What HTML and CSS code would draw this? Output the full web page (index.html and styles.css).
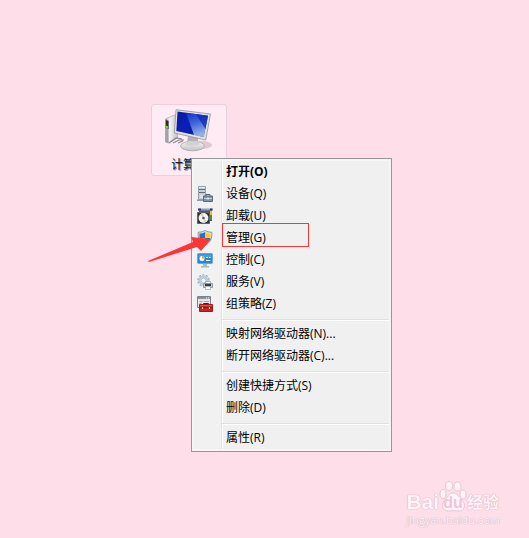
FILE: index.html
```html
<!DOCTYPE html>
<html lang="zh-CN">
<head>
  <meta charset="UTF-8">
  <meta name="viewport" content="width=device-width, initial-scale=1">
  <title>计算机</title>
  <link rel="stylesheet" href="styles.css">
</head>
<body>

  <main class="desktop">

    <div class="shortcut">
      <svg class="shortcut-icon" width="50" height="48" viewBox="0 0 50 48">
        <defs>
          <linearGradient id="screen" x1="0" y1="0" x2="1" y2="0.6">
            <stop offset="0" stop-color="#0a1a94"/>
            <stop offset="0.4" stop-color="#0a1fb8"/>
            <stop offset="1" stop-color="#0a1c9c"/>
          </linearGradient>
          <linearGradient id="shine" x1="0" y1="0" x2="0.3" y2="1">
            <stop offset="0" stop-color="#1238c8"/>
            <stop offset="0.5" stop-color="#4d7eea"/>
            <stop offset="1" stop-color="#c6dffc"/>
          </linearGradient>
          <linearGradient id="tower" x1="0" y1="0" x2="1" y2="0">
            <stop offset="0" stop-color="#b4b4b8"/>
            <stop offset="0.35" stop-color="#f4f4f6"/>
            <stop offset="1" stop-color="#c2c2c6"/>
          </linearGradient>
          <linearGradient id="stand" x1="0" y1="0" x2="0" y2="1">
            <stop offset="0" stop-color="#f8f8f8"/>
            <stop offset="1" stop-color="#c0c0c4"/>
          </linearGradient>
        </defs>
        <ellipse cx="38" cy="36" rx="10" ry="4" fill="#cfb0bd" opacity="0.6"/>
        <path d="M1.500 10l9-4h3v23l-9 5-3-1z" fill="url(#tower)" stroke="#9a9a9e" stroke-width="0.6"/>
        <path d="M1.500 10l3 1v23l-3-1z" fill="#a2a2a6"/>
        <path d="M1.800 11l2.700 1v8l-2.700-1z" fill="#2c2c2e"/>
        <path d="M2 16.500l2 .8v2.500l-2-.8z" fill="#62e01e"/>
        <path d="M5 34l7-5 6 1M9 34l6-3 5 0M14 34l5-2" fill="none" stroke="#8a8a8e" stroke-width="1.200"/>
        <path d="M24 27h10v7H23z" fill="#b4b4b8"/>
        <ellipse cx="28.500" cy="37" rx="12" ry="4.800" fill="url(#stand)" stroke="#a2a2a6" stroke-width="0.7"/>
        <path d="M21 35l4-3h8l3 3c-4 2-11 2-15 0z" fill="#d2d2d6"/>
        <path d="M12 .7L46.500 5 41.700 31 10.300 24z" fill="#e2e2e4" stroke="#929296" stroke-width="0.8"/>
        <path d="M13.500 2.500L44 6.800 39.700 28 12.300 22z" fill="url(#screen)"/>
        <path d="M22 3.700L44 6.800 39.700 28 30 26z" fill="url(#shine)" opacity="0.75"/>
        <path d="M32 5.200L44 6.800 41.500 20z" fill="#0b25b8" opacity="0.75"/>
      </svg>
      <span class="shortcut-label">计算机</span>
    </div>

    <div class="menu" role="menu">
      <button class="item default" role="menuitem"><span class="icon"></span>打开(O)</button>
      <button class="item" role="menuitem">
        <svg class="icon" viewBox="0 0 16 16">
          <path d="M1.500.5h7v13h-7z" fill="#c9d1d6" stroke="#93a0a8"/>
          <path d="M2 3.500h6M2 6.500h6" stroke="#5f6d77"/>
          <path d="M2 1.500h6" stroke="#e8edf0"/>
          <path d="M3 9h4v3H3z" fill="#dde2e6"/>
          <path d="M0 13.500h8V15H0z" fill="#8f9ca5"/>
          <path d="M9 10V8.500h4V10" fill="none" stroke="#59666f"/>
          <path d="M6.500 10h9v5.500h-9z" fill="#8196a3" stroke="#566975"/>
          <path d="M7 12.500h8" stroke="#c7d2d9"/>
          <path d="M10.500 11.500h1v2h-1z" fill="#fff"/>
        </svg>设备(Q)
      </button>
      <button class="item" role="menuitem">
        <svg class="icon" viewBox="0 0 16 16">
          <path d="M2 1h13v12H2z" fill="#3058ad"/>
          <path d="M1 .5h14.500v2H1z" fill="#9a9cab"/>
          <path d="M1 .5h3v2H1zM13 .5h2.500v2H13z" fill="#303b75"/>
          <path d="M13 3h2v4h-2z" fill="#e1c52e"/>
          <path d="M13 7h2v5h-2z" fill="#51853d"/>
          <path d="M.5 4.500h12v11H.5z" fill="#2e3033" stroke="#69625a"/>
          <circle cx="6.500" cy="10" r="4.900" fill="#f4f4f4"/>
          <path d="M6.500 10L3 6.700A5 5 0 0 1 6.500 5.200zM6.500 10l3.500 3.300a5 5 0 0 1-3.500 1.500z" fill="#cddcc8"/>
          <circle cx="6.500" cy="10" r="1.300" fill="#555"/>
        </svg>卸载(U)
      </button>
      <button class="item marked" role="menuitem">
        <svg class="icon" viewBox="0 0 16 16">
          <path d="M8 .5c2 1.300 4 1.700 6.800 1.700C15.300 9 13 13 8 15.500 3 13 .7 9 1.200 2.200 4 2.200 6 1.800 8 .5z" fill="#dfe6eb" stroke="#8b98a3"/>
          <path d="M8 2v6H2.600c-.2-1.500-.3-2.900-.2-4.500C4.500 3.500 6.500 3 8 2z" fill="#2472c8"/>
          <path d="M8 2v6h5.400c.2-1.500.3-2.900.2-4.500C11.500 3.500 9.500 3 8 2z" fill="#f8cd25"/>
          <path d="M8 8v6c-3-1.500-4.700-3.500-5.400-6z" fill="#f2c21c"/>
          <path d="M8 8v6c3-1.500 4.700-3.500 5.400-6z" fill="#2472c8"/>
        </svg>管理(G)
      </button>
      <button class="item" role="menuitem">
        <svg class="icon" viewBox="0 0 16 16">
          <rect x=".5" y="1.500" width="15" height="10" rx="1" fill="#2588d4" stroke="#6da5cc"/>
          <path d="M1.500 2.500h13v3h-13z" fill="#459fe0"/>
          <circle cx="5" cy="6.500" r="2.500" fill="#fff"/>
          <path d="M5 6.500V4a2.500 2.500 0 0 1 2.500 2.500z" fill="#f09a24"/>
          <path d="M9 5.500h2M12 5.500h1.500M9 8.500h4.500" stroke="#fff"/>
          <path d="M6 12h4v2H6z" fill="#9ebdd2"/>
          <path d="M4 14h8v1.500H4z" fill="#a9b8c4"/>
        </svg>控制(C)
      </button>
      <button class="item" role="menuitem">
        <svg class="icon" viewBox="0 0 16 16">
          <circle cx="6.500" cy="6.500" r="5.500" fill="none" stroke="#9cb6cb" stroke-width="1.600" stroke-dasharray="2 1.450"/>
          <circle cx="6.500" cy="6.500" r="4" fill="none" stroke="#b4cadb" stroke-width="2"/>
          <circle cx="6.500" cy="6.500" r="2.500" fill="#eef2f5" stroke="#8aa2b7" stroke-width="0.6"/>
          <path d="M8.500 7.500h5V10h-5z" fill="#fff" stroke="#8b949c" stroke-width="0.6"/>
          <path d="M6.500 9.500h9v4h-9z" fill="#c4c8cc" stroke="#858c93" stroke-width="0.8"/>
          <path d="M8 10h6v2H8z" fill="#3a3d40"/>
          <path d="M8.500 12.500h5v3h-5z" fill="#fff" stroke="#92989d" stroke-width="0.6"/>
        </svg>服务(V)
      </button>
      <button class="item" role="menuitem">
        <svg class="icon" viewBox="0 0 16 16">
          <path d="M.5.500h13v11H.5z" fill="#e2e6e9" stroke="#79838a"/>
          <path d="M1 1h12v2H1z" fill="#87929a"/>
          <path d="M9 2h1M11 2h1" stroke="#fff"/>
          <path d="M2.500 5.500h3M7 5.500h5M2.500 7.500h2" stroke="#9ea9b1"/>
          <path d="M6.500 9V7.500h5V9" fill="none" stroke="#4c2020"/>
          <path d="M2.500 8.500h13v7h-13z" fill="#c42626" stroke="#a01919"/>
          <path d="M3 9h12v1H3z" fill="#dd5a52"/>
          <path d="M3 11.500h12" stroke="#8e1616"/>
          <path d="M5 11h1v2H5zM12 11h1v2h-1z" fill="#fff"/>
        </svg>组策略(Z)
      </button>
      <hr class="separator">
      <button class="item" role="menuitem"><span class="icon"></span>映射网络驱动器(N)...</button>
      <button class="item" role="menuitem"><span class="icon"></span>断开网络驱动器(C)...</button>
      <hr class="separator">
      <button class="item" role="menuitem"><span class="icon"></span>创建快捷方式(S)</button>
      <button class="item" role="menuitem"><span class="icon"></span>删除(D)</button>
      <hr class="separator">
      <button class="item" role="menuitem"><span class="icon"></span>属性(R)</button>
    </div>

    <svg class="arrow" width="64" height="28" viewBox="0 0 64 28">
      <path d="M0 25L45 6 43 1 63 3 53 15 49 11 1 26z" fill="#fa3737"/>
    </svg>

    <div class="watermark">
      <div class="brand">
        <span class="bai">Bai</span>
        <span class="paw">
          <svg width="28" height="31" viewBox="0 0 28 31">
            <g fill="#fff3f8" stroke="#e6c8d3">
              <ellipse cx="4" cy="13" rx="3" ry="4.500"/>
              <ellipse cx="10" cy="5" rx="3.500" ry="4.500"/>
              <ellipse cx="18.500" cy="5.500" rx="3.500" ry="4.500"/>
              <ellipse cx="24" cy="13.500" rx="3" ry="4.500"/>
              <path d="M14 12c-4 0-5 4-8 7-4 4-3 11 3 11 3 0 3-.5 5-.5s3 .5 6 .5c6 0 7-7 3-11-3-3-5-7-9-7z"/>
            </g>
          </svg>
          <span class="du">du</span>
        </span>
        <span class="name">经验</span>
      </div>
      <div class="site">jingyan.baidu.com</div>
    </div>

  </main>

</body>
</html>
```

FILE: styles.css
```css
body {
  margin: 0;
  font-family: "Open Sans", "Noto Sans CJK SC", sans-serif;
  font-size: 12px;
  background-color: #fddee9;
  color: #000;
}

.desktop {
  position: relative;
  min-height: 100vh;
  overflow: hidden;
}

/* desktop shortcut */
.shortcut {
  position: absolute;
  left: 151px;
  top: 104px;
  box-sizing: border-box;
  width: 76px;
  height: 72px;
  display: flex;
  flex-direction: column;
  align-items: center;
  border: 1px solid #ebcfdc;
  border-radius: 3px;
  background-color: #feebf3;
}

.shortcut-icon {
  margin-top: 4px;
}

.shortcut-label {
  line-height: 16px;
  color: #141c2c;
  text-shadow: 1px 1px 1px #4a6f96, -1px 0 0 #fff;
}

/* context menu */
.menu {
  position: absolute;
  left: 191px;
  top: 158px;
  box-sizing: border-box;
  width: 201px;
  padding: 2px;
  border: 1px solid #979797;
  background: linear-gradient(to right, #f1f1f1 27px, #e2e3e3 27px, #e2e3e3 28px, #fff 28px, #fff 29px, #f0f0f0 29px) content-box, #f5f5f5;
}

.item {
  position: relative;
  display: flex;
  align-items: center;
  gap: 13px;
  width: 100%;
  height: 22px;
  padding: 0 3px 2px;
  border: none;
  background: none;
  font: inherit;
  color: inherit;
  white-space: nowrap;
}

.item:hover {
  background-color: rgba(174, 207, 247, 0.3);
}

.default {
  font-weight: bold;
}

.icon {
  flex: none;
  width: 16px;
  height: 16px;
  margin-top: 2px;
}

.marked::after {
  content: "";
  position: absolute;
  left: 28px;
  top: -4px;
  box-sizing: border-box;
  width: 87px;
  height: 24px;
  border: 1px solid #fa3737;
}

.separator {
  height: 1px;
  margin: 4px 0 2px 28px;
  border: none;
  border-bottom: 1px solid #fff;
  background-color: #e0e0e0;
}

.arrow {
  position: absolute;
  left: 148px;
  top: 236px;
}

/* watermark */
.watermark {
  position: absolute;
  right: 29px;
  bottom: 11px;
  color: #fff3f8;
  text-shadow: 0 0 1px #d3aebc, 0 0 1px #d3aebc;
}

.brand {
  display: flex;
  align-items: flex-end;
  height: 32px;
}

.bai {
  font: bold 21px/22px "Liberation Sans", sans-serif;
}

.paw {
  position: relative;
  height: 32px;
}

.du {
  position: absolute;
  left: 0;
  right: 0;
  bottom: 2px;
  text-align: center;
  font: bold 16px/16px "Liberation Sans", sans-serif;
  color: #ecc8d5;
  text-shadow: none;
}

.name {
  font-size: 16px;
  font-weight: bold;
  line-height: 22px;
}

.site {
  font-size: 11px;
  line-height: 14px;
}
```
